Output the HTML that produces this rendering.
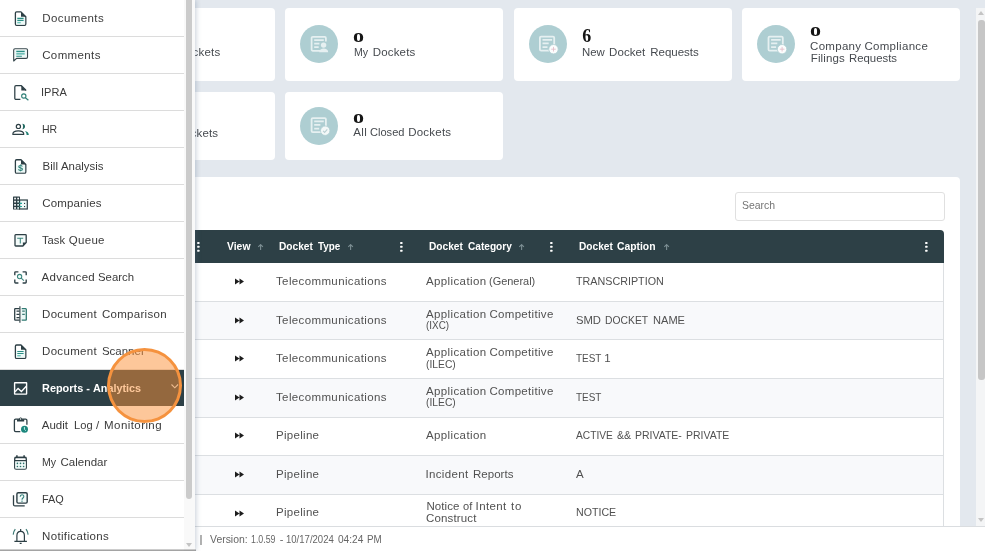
<!DOCTYPE html>
<html><head><meta charset="utf-8">
<style>
*{box-sizing:border-box;margin:0;padding:0}
html,body{width:985px;height:551px;overflow:hidden}
body{background:#e3e8ee;font-family:"Liberation Sans",sans-serif;position:relative;color:#4a4a4a}
.abs{position:absolute}
.t{position:absolute;white-space:nowrap}
.card{position:absolute;background:#fff;border-radius:4px}
.circ{position:absolute;width:38px;height:38px;border-radius:50%;background:#aeced2}
.num{font-family:"Liberation Serif",serif;font-weight:bold;color:#161616;line-height:1}
.lbl{font-size:11.5px;color:#464a4f;line-height:12px}
#panel{position:absolute;left:150px;top:177px;width:810px;height:400px;background:#fff;border-radius:4px}
#search{position:absolute;left:735px;top:192px;width:210px;height:29px;border:1px solid #e0e0e0;border-radius:3px;background:#fff}
#thead{position:absolute;left:150px;top:230px;width:794px;height:33px;background:#2d4046;border-radius:4px 4px 0 0}
.th{line-height:12px;font-weight:bold;font-size:10px;color:#fff}
.row{position:absolute;left:150px;width:794px;height:38.58px;border-bottom:1px solid #dcdfe2;border-right:1px solid #dcdfe2}
.row.alt{background:#f8f9fb}
.td{font-size:11.5px;line-height:12px;color:#515151}
#footer{position:absolute;left:0;top:526px;width:985px;height:25px;background:#fff;border-top:1px solid #dadde0}
#side{position:absolute;left:0;top:0;width:195px;height:551px;background:#fff;box-shadow:1px 0 5px rgba(70,95,130,.3)}
.mi{position:absolute;left:0;width:184px;height:37px;border-bottom:1px solid #dcdcdc}
.ml{font-size:11.5px;line-height:12px;color:#3b3b3b}
#root{position:absolute;left:0;top:0;width:985px;height:551px;will-change:transform;opacity:.999}
</style></head><body><div id="root">

<div class="card" style="left:57px;top:8px;width:218px;height:73px"></div>
<div class="card" style="left:285px;top:8px;width:218px;height:73px"></div>
<div class="card" style="left:514px;top:8px;width:218px;height:73px"></div>
<div class="card" style="left:742px;top:8px;width:218px;height:73px"></div>
<div class="card" style="left:57px;top:92px;width:218px;height:68px"></div>
<div class="card" style="left:285px;top:92px;width:218px;height:68px"></div>
<div class="circ" style="left:300.0px;top:25.0px"></div>
<div class="circ" style="left:528.5px;top:25.0px"></div>
<div class="circ" style="left:757.0px;top:25.0px"></div>
<div class="circ" style="left:300.0px;top:106.5px"></div>
<svg class="abs" style="left:0;top:0" width="985" height="200" viewBox="0 0 985 200"><path d="M320.4 50.8h-7.600a1.200 1.200 0 0 1-1.200-1.200v-11.600a1.200 1.200 0 0 1 1.200-1.200h11.900a1.200 1.200 0 0 1 1.200 1.200v3.500" fill="none" stroke="#e6f0f1" stroke-width="1.750"/><path d="M314.2 40.0h9.600M314.2 43.6h5.200M314.2 47.2h4.500" stroke="#e6f0f1" stroke-width="1.750"/><circle cx="323.6" cy="45.1" r="2.700" fill="#e6f0f1"/><path d="M319.2 52.2c0-4.800 9-4.800 9 0z" fill="#e6f0f1"/><rect x="539.9" y="36.6" width="14.3" height="14" rx="1.2" fill="none" stroke="#e6f0f1" stroke-width="1.8"/><path d="M542.5 39.8h9.600M542.5 43.4h6.200M542.5 47.0h5" stroke="#e6f0f1" stroke-width="1.750"/><circle cx="553.5" cy="49.2" r="4.700" fill="#fbfdfd" stroke="#aeced2" stroke-width=".8"/><path d="M551.2 49.2h4.600M553.5 46.9v4.600" stroke="#e2bcc7" stroke-width=".85"/><rect x="768.5" y="36.6" width="14.3" height="14" rx="1.2" fill="none" stroke="#e6f0f1" stroke-width="1.8"/><path d="M771.1 39.8h9.600M771.1 43.4h6.200M771.1 47.0h5" stroke="#e6f0f1" stroke-width="1.750"/><circle cx="782.1" cy="49.2" r="4.700" fill="#fbfdfd" stroke="#aeced2" stroke-width=".8"/><path d="M779.8 49.2h4.600M782.1 46.9v4.600" stroke="#e2bcc7" stroke-width=".85"/><rect x="311.6" y="118.1" width="14.3" height="14" rx="1.2" fill="none" stroke="#e6f0f1" stroke-width="1.8"/><path d="M314.2 121.3h9.600M314.2 124.9h6.200M314.2 128.5h5" stroke="#e6f0f1" stroke-width="1.750"/><circle cx="325.2" cy="130.7" r="4.700" fill="#f3f8f8" stroke="#aeced2" stroke-width=".8"/><path d="M323.1 130.9l1.500 1.500 2.700-3" stroke="#b9cfd2" stroke-width="1.100" fill="none"/></svg>
<div class="t lbl" style="left:192.60px;top:46.0px;letter-spacing:0.18px;">ckets</div>
<div class="t lbl" style="left:190.70px;top:126.7px;letter-spacing:0.10px;">ckets</div>
<div class="t num" style="left:353.30px;top:26.1px;font-size:19px;transform:scaleX(1.16);transform-origin:0 0;">o</div>
<div class="t num" style="left:582.30px;top:26.8px;font-size:18px;">6</div>
<div class="t num" style="left:809.90px;top:20.3px;font-size:19px;transform:scaleX(1.16);transform-origin:0 0;">o</div>
<div class="t num" style="left:353.30px;top:107.2px;font-size:19px;transform:scaleX(1.16);transform-origin:0 0;">o</div>
<div class="t lbl" style="left:353.80px;top:45.7px;transform:scaleX(0.9243);transform-origin:0 0;">My</div><div class="t lbl" style="left:372.80px;top:45.7px;letter-spacing:0.15px;">Dockets</div>
<div class="t lbl" style="left:582.20px;top:45.7px;transform:scaleX(0.9873);transform-origin:0 0;">New</div><div class="t lbl" style="left:609.10px;top:45.7px;letter-spacing:0.08px;">Docket</div><div class="t lbl" style="left:650.30px;top:45.7px;letter-spacing:-0.03px;">Requests</div>
<div class="t lbl" style="left:810.10px;top:40.0px;letter-spacing:0.29px;">Company</div><div class="t lbl" style="left:864.40px;top:40.0px;letter-spacing:0.30px;">Compliance</div>
<div class="t lbl" style="left:810.80px;top:52.0px;letter-spacing:0.10px;">Filings</div><div class="t lbl" style="left:848.80px;top:52.0px;transform:scaleX(0.9891);transform-origin:0 0;">Requests</div>
<div class="t lbl" style="left:353.20px;top:126.4px;letter-spacing:0.44px;">All</div><div class="t lbl" style="left:369.90px;top:126.4px;transform:scaleX(0.9632);transform-origin:0 0;">Closed</div><div class="t lbl" style="left:408.20px;top:126.4px;letter-spacing:0.22px;">Dockets</div>
<div class="abs" style="left:976px;top:8px;width:9px;height:518px;background:#f4f5f6"></div>
<div class="abs" style="left:978px;top:20px;width:7px;height:360px;background:#c6c6c6;border-radius:3px"></div>
<svg class="abs" style="left:978px;top:11px" width="6" height="4" viewBox="0 0 6 4"><path d="M0 4h6l-3-4z" fill="#c4c4c4"/></svg>
<svg class="abs" style="left:978px;top:518px" width="6" height="4" viewBox="0 0 6 4"><path d="M0 0h6l-3 4z" fill="#c4c4c4"/></svg>
<div id="panel"></div><div id="search"></div>
<div class="t " style="left:742.00px;top:198.2px;font-size:11px;line-height:14px;color:#757575;transform:scaleX(0.9500);transform-origin:0 0;">Search</div>
<div id="thead"></div>
<div class="row" style="top:263.30px"></div>
<svg class="abs" style="left:235px;top:278.1px" width="10" height="7" viewBox="0 0 10 7"><path d="M0 0.6 L4.5 3.5 L0 6.4Z M4.5 0.6 L9 3.5 L4.5 6.4Z" fill="#1d1d1d"/></svg>
<div class="t td" style="left:276.00px;top:274.9px;letter-spacing:0.37px;">Telecommunications</div>
<div class="t td" style="left:426.00px;top:274.9px;letter-spacing:0.38px;">Application</div><div class="t td" style="left:489.40px;top:274.9px;transform:scaleX(0.9519);transform-origin:0 0;">(General)</div>
<div class="t td" style="left:576.00px;top:274.9px;transform:scaleX(0.9347);transform-origin:0 0;">TRANSCRIPTION</div>
<div class="row alt" style="top:301.88px"></div>
<svg class="abs" style="left:235px;top:316.7px" width="10" height="7" viewBox="0 0 10 7"><path d="M0 0.6 L4.5 3.5 L0 6.4Z M4.5 0.6 L9 3.5 L4.5 6.4Z" fill="#1d1d1d"/></svg>
<div class="t td" style="left:276.00px;top:313.5px;letter-spacing:0.37px;">Telecommunications</div>
<div class="t td" style="left:426.00px;top:307.5px;letter-spacing:0.38px;">Application</div><div class="t td" style="left:489.40px;top:307.5px;letter-spacing:0.32px;">Competitive</div>
<div class="t td" style="left:426.40px;top:319.3px;transform:scaleX(0.8593);transform-origin:0 0;">(IXC)</div>
<div class="t td" style="left:576.00px;top:313.5px;transform:scaleX(0.9782);transform-origin:0 0;">SMD</div><div class="t td" style="left:605.40px;top:313.5px;transform:scaleX(0.8999);transform-origin:0 0;">DOCKET</div><div class="t td" style="left:652.50px;top:313.5px;transform:scaleX(0.9626);transform-origin:0 0;">NAME</div>
<div class="row" style="top:340.46px"></div>
<svg class="abs" style="left:235px;top:355.3px" width="10" height="7" viewBox="0 0 10 7"><path d="M0 0.6 L4.5 3.5 L0 6.4Z M4.5 0.6 L9 3.5 L4.5 6.4Z" fill="#1d1d1d"/></svg>
<div class="t td" style="left:276.00px;top:352.1px;letter-spacing:0.37px;">Telecommunications</div>
<div class="t td" style="left:426.00px;top:346.1px;letter-spacing:0.38px;">Application</div><div class="t td" style="left:489.40px;top:346.1px;letter-spacing:0.32px;">Competitive</div>
<div class="t td" style="left:426.40px;top:357.9px;transform:scaleX(0.8953);transform-origin:0 0;">(ILEC)</div>
<div class="t td" style="left:576.00px;top:352.1px;transform:scaleX(0.8650);transform-origin:0 0;">TEST</div><div class="t td" style="left:604.30px;top:352.1px;">1</div>
<div class="row alt" style="top:379.04px"></div>
<svg class="abs" style="left:235px;top:393.8px" width="10" height="7" viewBox="0 0 10 7"><path d="M0 0.6 L4.5 3.5 L0 6.4Z M4.5 0.6 L9 3.5 L4.5 6.4Z" fill="#1d1d1d"/></svg>
<div class="t td" style="left:276.00px;top:390.6px;letter-spacing:0.37px;">Telecommunications</div>
<div class="t td" style="left:426.00px;top:384.6px;letter-spacing:0.38px;">Application</div><div class="t td" style="left:489.40px;top:384.6px;letter-spacing:0.32px;">Competitive</div>
<div class="t td" style="left:426.40px;top:396.4px;transform:scaleX(0.8953);transform-origin:0 0;">(ILEC)</div>
<div class="t td" style="left:576.00px;top:390.6px;transform:scaleX(0.8650);transform-origin:0 0;">TEST</div>
<div class="row" style="top:417.62px"></div>
<svg class="abs" style="left:235px;top:432.4px" width="10" height="7" viewBox="0 0 10 7"><path d="M0 0.6 L4.5 3.5 L0 6.4Z M4.5 0.6 L9 3.5 L4.5 6.4Z" fill="#1d1d1d"/></svg>
<div class="t td" style="left:276.00px;top:429.2px;letter-spacing:0.30px;">Pipeline</div>
<div class="t td" style="left:426.00px;top:429.2px;letter-spacing:0.38px;">Application</div>
<div class="t td" style="left:576.00px;top:429.2px;transform:scaleX(0.8862);transform-origin:0 0;">ACTIVE</div><div class="t td" style="left:616.90px;top:429.2px;transform:scaleX(0.9189);transform-origin:0 0;">&amp;&amp;</div><div class="t td" style="left:635.20px;top:429.2px;transform:scaleX(0.9126);transform-origin:0 0;">PRIVATE-</div><div class="t td" style="left:686.00px;top:429.2px;transform:scaleX(0.9116);transform-origin:0 0;">PRIVATE</div>
<div class="row alt" style="top:456.20px"></div>
<svg class="abs" style="left:235px;top:471.0px" width="10" height="7" viewBox="0 0 10 7"><path d="M0 0.6 L4.5 3.5 L0 6.4Z M4.5 0.6 L9 3.5 L4.5 6.4Z" fill="#1d1d1d"/></svg>
<div class="t td" style="left:276.00px;top:467.8px;letter-spacing:0.30px;">Pipeline</div>
<div class="t td" style="left:425.40px;top:467.8px;letter-spacing:0.36px;">Incident</div><div class="t td" style="left:472.90px;top:467.8px;letter-spacing:0.06px;">Reports</div>
<div class="t td" style="left:576.00px;top:467.8px;">A</div>
<div class="row" style="top:494.78px"></div>
<svg class="abs" style="left:235px;top:509.6px" width="10" height="7" viewBox="0 0 10 7"><path d="M0 0.6 L4.5 3.5 L0 6.4Z M4.5 0.6 L9 3.5 L4.5 6.4Z" fill="#1d1d1d"/></svg>
<div class="t td" style="left:276.00px;top:506.4px;letter-spacing:0.30px;">Pipeline</div>
<div class="t td" style="left:426.40px;top:500.4px;letter-spacing:0.10px;">Notice</div><div class="t td" style="left:463.30px;top:500.4px;transform:scaleX(0.9619);transform-origin:0 0;">of</div><div class="t td" style="left:475.60px;top:500.4px;letter-spacing:0.36px;">Intent</div><div class="t td" style="left:511.00px;top:500.4px;letter-spacing:0.70px;">to</div>
<div class="t td" style="left:426.00px;top:512.2px;letter-spacing:0.14px;">Construct</div>
<div class="t td" style="left:576.00px;top:506.4px;transform:scaleX(0.9252);transform-origin:0 0;">NOTICE</div>
<svg class="abs" style="left:197.4px;top:241.900px" width="3" height="10" viewBox="0 0 3 10"><rect x=".2" y="0" width="2.300" height="2" rx=".5" fill="#fff"/><rect x=".2" y="3.850" width="2.300" height="2" rx=".5" fill="#fff"/><rect x=".2" y="7.650" width="2.300" height="2" rx=".5" fill="#fff"/></svg>
<svg class="abs" style="left:400.2px;top:241.900px" width="3" height="10" viewBox="0 0 3 10"><rect x=".2" y="0" width="2.300" height="2" rx=".5" fill="#fff"/><rect x=".2" y="3.850" width="2.300" height="2" rx=".5" fill="#fff"/><rect x=".2" y="7.650" width="2.300" height="2" rx=".5" fill="#fff"/></svg>
<svg class="abs" style="left:550.1px;top:241.900px" width="3" height="10" viewBox="0 0 3 10"><rect x=".2" y="0" width="2.300" height="2" rx=".5" fill="#fff"/><rect x=".2" y="3.850" width="2.300" height="2" rx=".5" fill="#fff"/><rect x=".2" y="7.650" width="2.300" height="2" rx=".5" fill="#fff"/></svg>
<svg class="abs" style="left:924.9px;top:241.900px" width="3" height="10" viewBox="0 0 3 10"><rect x=".2" y="0" width="2.300" height="2" rx=".5" fill="#fff"/><rect x=".2" y="3.850" width="2.300" height="2" rx=".5" fill="#fff"/><rect x=".2" y="7.650" width="2.300" height="2" rx=".5" fill="#fff"/></svg>
<svg class="abs" style="left:256.9px;top:244px" width="7" height="7" viewBox="0 0 7 7"><path d="M3.600 6V.6M1.300 2.900L3.600 .6L5.900 2.900" stroke="#7c8e93" stroke-width="1.100" fill="none"/></svg>
<svg class="abs" style="left:347.1px;top:244px" width="7" height="7" viewBox="0 0 7 7"><path d="M3.600 6V.6M1.300 2.900L3.600 .6L5.900 2.900" stroke="#7c8e93" stroke-width="1.100" fill="none"/></svg>
<svg class="abs" style="left:518.2px;top:244px" width="7" height="7" viewBox="0 0 7 7"><path d="M3.600 6V.6M1.300 2.900L3.600 .6L5.900 2.900" stroke="#7c8e93" stroke-width="1.100" fill="none"/></svg>
<svg class="abs" style="left:662.6px;top:244px" width="7" height="7" viewBox="0 0 7 7"><path d="M3.600 6V.6M1.300 2.900L3.600 .6L5.900 2.900" stroke="#7c8e93" stroke-width="1.100" fill="none"/></svg>
<div class="t th" style="left:226.60px;top:241.1px;transform:scaleX(1.0381);transform-origin:0 0;">View</div>
<div class="t th" style="left:279.40px;top:241.1px;transform:scaleX(1.0172);transform-origin:0 0;">Docket</div><div class="t th" style="left:317.60px;top:241.1px;transform:scaleX(0.9897);transform-origin:0 0;">Type</div>
<div class="t th" style="left:429.30px;top:241.1px;transform:scaleX(1.0172);transform-origin:0 0;">Docket</div><div class="t th" style="left:467.70px;top:241.1px;transform:scaleX(1.0118);transform-origin:0 0;">Category</div>
<div class="t th" style="left:579.00px;top:241.1px;transform:scaleX(1.0143);transform-origin:0 0;">Docket</div><div class="t th" style="left:617.40px;top:241.1px;transform:scaleX(1.0348);transform-origin:0 0;">Caption</div>
<div id="footer"></div>
<div class="abs" style="left:200.200px;top:535px;width:2px;height:9.500px;background:#b2b2b2"></div>
<div class="t " style="left:210.20px;top:533.3px;font-size:11px;line-height:12px;color:#666;transform:scaleX(0.9473);transform-origin:0 0;">Version:</div><div class="t " style="left:251.20px;top:533.3px;font-size:11px;line-height:12px;color:#666;transform:scaleX(0.8009);transform-origin:0 0;">1.0.59</div><div class="t " style="left:279.70px;top:533.3px;font-size:11px;line-height:12px;color:#666;">-</div><div class="t " style="left:286.40px;top:533.3px;font-size:11px;line-height:12px;color:#666;transform:scaleX(0.8683);transform-origin:0 0;">10/17/2024</div><div class="t " style="left:337.70px;top:533.3px;font-size:11px;line-height:12px;color:#666;transform:scaleX(0.9194);transform-origin:0 0;">04:24</div><div class="t " style="left:367.20px;top:533.3px;font-size:11px;line-height:12px;color:#666;transform:scaleX(0.8937);transform-origin:0 0;">PM</div>
<div id="side">
<div class="mi" style="top:0px"></div>
<div class="t ml" style="left:42.20px;top:12.0px;letter-spacing:0.42px;">Documents</div>
<div class="mi" style="top:37px"></div>
<div class="t ml" style="left:42.20px;top:49.0px;letter-spacing:0.38px;">Comments</div>
<div class="mi" style="top:74px"></div>
<div class="t ml" style="left:41.24px;top:86.0px;transform:scaleX(0.9591);transform-origin:0 0;">IPRA</div>
<div class="mi" style="top:111px"></div>
<div class="t ml" style="left:42.20px;top:123.0px;transform:scaleX(0.9138);transform-origin:0 0;">HR</div>
<div class="mi" style="top:148px"></div>
<div class="t ml" style="left:42.40px;top:160.0px;letter-spacing:0.07px;">Bill</div><div class="t ml" style="left:61.40px;top:160.0px;transform:scaleX(0.9914);transform-origin:0 0;">Analysis</div>
<div class="mi" style="top:185px"></div>
<div class="t ml" style="left:42.20px;top:197.0px;letter-spacing:0.15px;">Companies</div>
<div class="mi" style="top:222px"></div>
<div class="t ml" style="left:41.80px;top:234.0px;transform:scaleX(0.9751);transform-origin:0 0;">Task</div><div class="t ml" style="left:68.70px;top:234.0px;letter-spacing:0.32px;">Queue</div>
<div class="mi" style="top:259px"></div>
<div class="t ml" style="left:41.60px;top:271.0px;letter-spacing:0.28px;">Advanced</div><div class="t ml" style="left:97.90px;top:271.0px;transform:scaleX(0.9878);transform-origin:0 0;">Search</div>
<div class="mi" style="top:296px"></div>
<div class="t ml" style="left:42.00px;top:308.0px;letter-spacing:0.33px;">Document</div><div class="t ml" style="left:101.90px;top:308.0px;letter-spacing:0.30px;">Comparison</div>
<div class="mi" style="top:333px"></div>
<div class="t ml" style="left:42.00px;top:345.0px;letter-spacing:0.33px;">Document</div><div class="t ml" style="left:101.90px;top:345.0px;letter-spacing:-0.00px;">Scanner</div>
<div class="abs" style="left:0;top:370px;width:184px;height:36px;background:#2d4046"></div>
<div class="t " style="left:41.80px;top:382.0px;font-weight:bold;font-size:11px;line-height:12px;color:#fff;transform:scaleX(0.9917);transform-origin:0 0;">Reports</div><div class="t " style="left:86.30px;top:382.0px;font-weight:bold;font-size:11px;line-height:12px;color:#fff;">-</div><div class="t " style="left:93.10px;top:382.0px;font-weight:bold;font-size:11px;line-height:12px;color:#fff;transform:scaleX(0.9838);transform-origin:0 0;">Analytics</div>
<div class="mi" style="top:407px"></div>
<div class="t ml" style="left:41.80px;top:419.0px;letter-spacing:-0.03px;">Audit</div><div class="t ml" style="left:74.10px;top:419.0px;transform:scaleX(0.9685);transform-origin:0 0;">Log</div><div class="t ml" style="left:96.10px;top:419.0px;">/</div><div class="t ml" style="left:104.10px;top:419.0px;letter-spacing:0.42px;">Monitoring</div>
<div class="mi" style="top:444px"></div>
<div class="t ml" style="left:42.20px;top:456.0px;transform:scaleX(0.9179);transform-origin:0 0;">My</div><div class="t ml" style="left:60.50px;top:456.0px;letter-spacing:0.02px;">Calendar</div>
<div class="mi" style="top:481px"></div>
<div class="t ml" style="left:42.20px;top:493.0px;transform:scaleX(0.9453);transform-origin:0 0;">FAQ</div>
<div class="mi" style="top:518px"></div>
<div class="t ml" style="left:42.00px;top:530.0px;letter-spacing:0.35px;">Notifications</div>
<svg class="abs" style="left:0;top:0" width="195" height="551" viewBox="0 0 195 551">
<path d="M16.6 11.899999999999999h4.400l4.800 4.800v7.400a1.200 1.200 0 0 1-1.200 1.200h-8a1.200 1.200 0 0 1-1.200-1.200v-11a1.200 1.200 0 0 1 1.200-1.200z" fill="#fff" stroke="#2d3f45" stroke-width="1.300" stroke-linejoin="round"/><rect x="16.100" y="17.5" width="9" height="7" fill="#ecf9f7"/><path d="M21 11.899999999999999v4.800h4.800z" fill="#2d3f45"/><path d="M17.300 18.4h6.300M17.300 20.4h6.300" stroke="#2b8e85" stroke-width="1.200"/><path d="M17.300 22.6h3.400" stroke="#6cc5bb" stroke-width="1.400"/>
<path d="M15 48.700h11.200a1.300 1.300 0 0 1 1.300 1.300v7a1.300 1.300 0 0 1-1.300 1.300h-9.600l-2.900 2.700v-11a1.300 1.300 0 0 1 1.300-1.300z" fill="#fff" stroke="#37484d" stroke-width="1.150" stroke-linejoin="round"/><rect x="14.900" y="49.900" width="11.400" height="7.300" fill="#eaf8f6"/><path d="M16.300 51.400h8.400M16.300 56.200h5.600" stroke="#2b8e85" stroke-width="1.100"/><path d="M16.300 53.700h8.400" stroke="#6fbfb7" stroke-width="1.900"/>
<path d="M20.400 99.400h-4.400a1.200 1.200 0 0 1-1.200-1.200v-11.300a1.200 1.200 0 0 1 1.200-1.200h5.400l4.300 4.300v.8" fill="none" stroke="#2d3f45" stroke-width="1.250" stroke-linejoin="round"/><path d="M21.300 85.700v4.700h4.500z" fill="#2d3f45"/><circle cx="23.800" cy="96" r="2.150" fill="none" stroke="#2f7f77" stroke-width="1.100"/><path d="M25.400 97.700l3 2.600" stroke="#2f7f77" stroke-width="1.200"/>
<circle cx="18.4" cy="126.400" r="2.100" fill="none" stroke="#2d3f45" stroke-width="1.200"/><path d="M12.800 134.300c0-2.200 2.400-3.400 5.500-3.400s5.500 1.200 5.500 3.400z" fill="none" stroke="#2d3f45" stroke-width="1.200" stroke-linejoin="round"/><path d="M22.300 123.800c3.700 0 3.700 5.400 0 5.400c1-1.400 1-4 0-5.400z" fill="#236b62"/><path d="M24.700 130.900c2.600 .3 4.100 1.700 4.100 4h-2.200c0-1.700-.6-3-1.900-4z" fill="#1f7f72"/>
<path d="M16.6 159.75h4.400l4.800 4.800v7.400a1.200 1.200 0 0 1-1.200 1.200h-8a1.200 1.200 0 0 1-1.200-1.200v-11a1.200 1.200 0 0 1 1.200-1.200z" fill="#fff" stroke="#2d3f45" stroke-width="1.300" stroke-linejoin="round"/><rect x="16.100" y="165.35000000000002" width="9" height="7" fill="#ecf9f7"/><path d="M21 159.75v4.800h4.800z" fill="#2d3f45"/><text x="20.500" y="170.800" font-family="Liberation Sans, sans-serif" font-weight="bold" font-size="9" text-anchor="middle" fill="#2b7f76">$</text>
<rect x="13" y="196.400" width="7" height="13.200" rx=".5" fill="#2d3f45"/><rect x="14.2" y="197.7" width="1.700" height="1.700" fill="#fff"/><rect x="17.3" y="197.7" width="1.700" height="1.700" fill="#fff"/><rect x="14.2" y="200.8" width="1.700" height="1.700" fill="#fff"/><rect x="17.3" y="200.8" width="1.700" height="1.700" fill="#d9f4f0"/><rect x="14.2" y="204.0" width="1.700" height="1.700" fill="#fff"/><rect x="17.3" y="204.0" width="1.700" height="1.700" fill="#d9f4f0"/><rect x="14.2" y="207.1" width="1.700" height="1.700" fill="#fff"/><rect x="17.3" y="207.1" width="1.700" height="1.700" fill="#d9f4f0"/><rect x="19.600" y="200" width="7.700" height="9" fill="#eefaf8" stroke="#2d3f45" stroke-width="1.200"/><path d="M19.400 203.400h2.600M19.400 206.500h2.600" stroke="#27a79b" stroke-width="1.100"/><rect x="24" y="202.900" width="1.100" height="1.100" fill="#2d3f45"/><rect x="24" y="206" width="1.100" height="1.100" fill="#2d3f45"/>
<path d="M15.700 234.700h9.800a.7 .7 0 0 1 .7 .7v7.200l-3.300 3.400h-7.200a.7 .7 0 0 1-.7-.7v-9.900a.7 .7 0 0 1 .7-.7z" fill="#f4fbfa" stroke="#2d3f45" stroke-width="1.300" stroke-linejoin="round"/><path d="M26.200 242.600h-3.300v3.400z" fill="#2d3f45"/><path d="M17.200 238.300h6M20.300 238.300v5.300" stroke="#3a857d" stroke-width="1.050" fill="none"/>
<path d="M14.800 275.300v-2.700a.8 .8 0 0 1 .8-.8h2.800M22.600 271.800h2.800a.8 .8 0 0 1 .8 .8v2.700M26.200 279.500v2.700a.8 .8 0 0 1-.8 .8h-2.800M18.400 283h-2.800a.8 .8 0 0 1-.8-.8v-2.700" fill="none" stroke="#2d3f45" stroke-width="1.350"/><circle cx="19.600" cy="276.500" r="2.150" fill="#effaf8" stroke="#3a857d" stroke-width="1.050"/><path d="M21.200 278.100l2.700 2.500" stroke="#3a857d" stroke-width="1.150"/>
<rect x="20.600" y="309.300" width="5.300" height="10.900" fill="#eaf8f6"/><path d="M19.800 308.700h-4.500a.6 .6 0 0 0-.6 .6v10.300a.6 .6 0 0 0 .6 .6h4.500" fill="none" stroke="#2d3f45" stroke-width="1.300"/><path d="M16.500 311.200h3.300M16.500 314.400h3.300M16.500 317.600h3.300" stroke="#2d3f45" stroke-width="1.200"/><path d="M19.900 306.200v16.500" stroke="#46565a" stroke-width="1.300"/><path d="M21.700 308.700h4a.6 .6 0 0 1 .6 .6v10.300a.6 .6 0 0 1-.6 .6h-4" fill="none" stroke="#2f7a72" stroke-width="1.300"/><path d="M22.200 311.200h2.600M22.200 314.400h2.600" stroke="#3d7a75" stroke-width="1.200"/>
<path d="M16.6 345.0h4.400l4.800 4.800v7.400a1.200 1.200 0 0 1-1.200 1.200h-8a1.200 1.200 0 0 1-1.200-1.200v-11a1.200 1.200 0 0 1 1.200-1.200z" fill="#fff" stroke="#2d3f45" stroke-width="1.300" stroke-linejoin="round"/><rect x="16.100" y="350.6" width="9" height="7" fill="#ecf9f7"/><path d="M21 345.0v4.800h4.800z" fill="#2d3f45"/><path d="M17.300 351.5h6.300M17.300 353.5h6.300" stroke="#2b8e85" stroke-width="1.200"/><path d="M17.300 355.7h3.400" stroke="#6cc5bb" stroke-width="1.400"/>
<rect x="14.600" y="382.800" width="12" height="11.300" rx=".3" fill="none" stroke="#fff" stroke-width="1.400"/><path d="M15.100 391.800l3-3.400 3.300 3.100 4.900-5.300" fill="none" stroke="#fff" stroke-width="1.350"/>
<path d="M20.300 431.600h-4.600a1.300 1.300 0 0 1-1.300-1.300v-9.900a1.300 1.300 0 0 1 1.300-1.300h9.900a1.300 1.300 0 0 1 1.300 1.300v4.300" fill="none" stroke="#2d3f45" stroke-width="1.300"/><path d="M17 419.200h2.100c.2-2.300 2.800-2.300 3 0h2.100v2.300h-7.200z" fill="#2d3f45"/><circle cx="20.600" cy="419" r=".65" fill="#fff"/><circle cx="24.500" cy="429.200" r="3.500" fill="#1c877d"/><path d="M24.400 427.100v2.200l1.400 1.400" stroke="#c9f3ee" stroke-width="1" fill="none"/>
<rect x="14.700" y="457.400" width="11.600" height="11.800" rx="1.400" fill="#fff" stroke="#2d3f45" stroke-width="1.300"/><rect x="15.300" y="461.200" width="10.400" height="7.400" fill="#edf9f7"/><path d="M14.700 460.600h11.600" stroke="#2d3f45" stroke-width="1.200"/><path d="M14.700 457.500h11.600" stroke="#2d3f45" stroke-width="1.500"/><path d="M16.900 455.200v2.300M24.100 455.200v2.300" stroke="#2d3f45" stroke-width="1.500"/><circle cx="17.4" cy="463.4" r=".8" fill="#2c6f6a"/><circle cx="20.5" cy="463.4" r=".8" fill="#2c6f6a"/><circle cx="23.6" cy="463.4" r=".8" fill="#2c6f6a"/><circle cx="17.4" cy="466.5" r=".8" fill="#2c6f6a"/><circle cx="20.5" cy="466.5" r=".8" fill="#2c6f6a"/><circle cx="23.6" cy="466.5" r=".8" fill="#2c6f6a"/>
<rect x="16.900" y="492.700" width="10.300" height="10.400" rx="1.300" fill="#f3fbfa" stroke="#2d3f45" stroke-width="1.400"/><path d="M13.500 495.200v9.200a1.500 1.500 0 0 0 1.500 1.500h9.700" fill="none" stroke="#2d3f45" stroke-width="1.300"/><path d="M20.200 496.700c0-2.600 3.600-2.600 3.600-.3c0 1.600-1.800 1.600-1.800 3.300" fill="none" stroke="#35827c" stroke-width="1.100"/><rect x="21.400" y="500.600" width="1.200" height="1.200" fill="#35827c"/>
<path d="M14.400 541.400h12.500M16.900 541.400v-5.600c0-5.800 7.500-5.800 7.500 0v5.600" fill="none" stroke="#2d3f45" stroke-width="1.200" stroke-linejoin="round"/><path d="M19.700 543.400h1.900M20.650 529v2" stroke="#2d3f45" stroke-width="1.200"/><path d="M15.300 529.200c-1.200 1.500-2 3.300-2.100 5.400M26 529.200c1.200 1.500 2 3.300 2.100 5.400" fill="none" stroke="#3c7a75" stroke-width="1.200"/>
<path d="M171.500 384.500l3.300 3.300 3.300-3.300" fill="none" stroke="#dfe5e6" stroke-width="1.100"/></svg>
<div class="abs" style="left:184px;top:0;width:11px;height:551px;background:#f9f9f9"></div>
<div class="abs" style="left:186px;top:-10px;width:6px;height:509px;background:#cbcbcb;border-radius:3px"></div>
<svg class="abs" style="left:186px;top:543px" width="6" height="4" viewBox="0 0 6 4"><path d="M0 0h6l-3 4z" fill="#c4c4c4"/></svg>
<div class="abs" style="left:0;top:549.300px;width:196px;height:1.700px;background:linear-gradient(rgba(110,110,110,.2),rgba(95,95,95,.7))"></div>
</div>
<div class="abs" style="left:106.500px;top:347.700px;width:75.200px;height:75px;border-radius:50%;background:rgba(251,144,54,.5);border:3.500px solid #f5923e"></div>
</div></body></html>
